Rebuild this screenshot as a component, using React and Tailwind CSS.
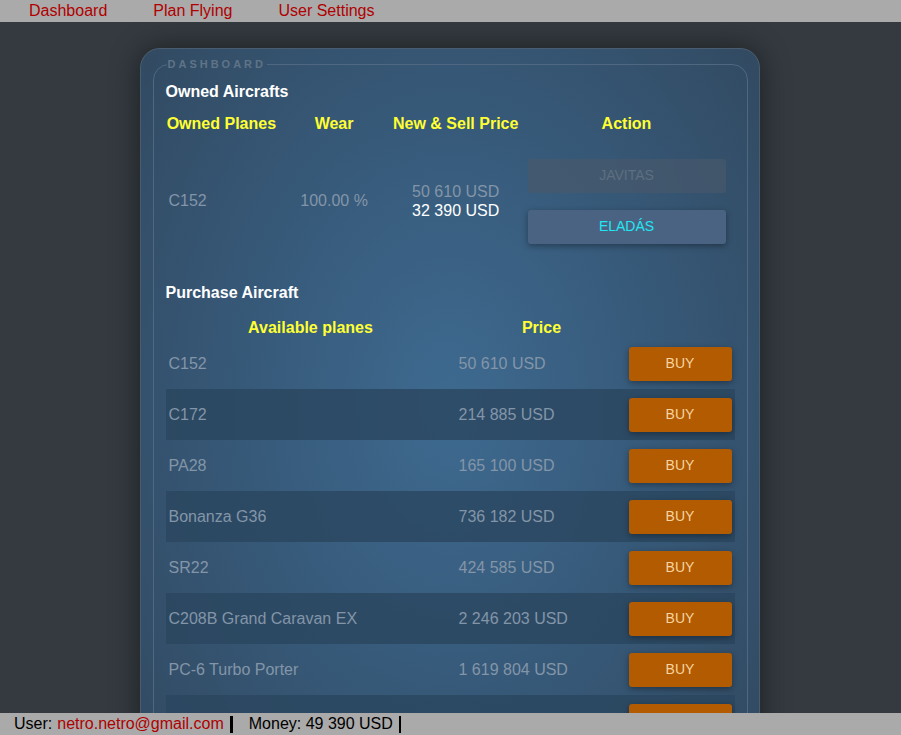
import React from "react";

const planes = [
  ["C152", "50 610 USD"],
  ["C172", "214 885 USD"],
  ["PA28", "165 100 USD"],
  ["Bonanza G36", "736 182 USD"],
  ["SR22", "424 585 USD"],
  ["C208B Grand Caravan EX", "2 246 203 USD"],
  ["PC-6 Turbo Porter", "1 619 804 USD"],
  ["King Air 350", "7 950 000 USD"],
  ["TBM 930", "4 250 000 USD"],
];

function App() {
  return (
    <div
      className="h-[735px] w-full overflow-hidden flex flex-col bg-[#343a40]"
      style={{ fontFamily: '"Liberation Sans", Arial, sans-serif' }}
    >
      <nav className="h-[22px] shrink-0 bg-[#aaaaaa] flex items-center pl-[29px] gap-[46px] text-[16px] leading-[22px] text-[#b00000]">
        <a href="#">Dashboard</a>
        <a href="#">Plan Flying</a>
        <a href="#">User Settings</a>
      </nav>

      <main className="flex-1 overflow-hidden flex items-start justify-center pt-[26px] pr-[2px]">
        <div className="w-[620px] shrink-0 rounded-[20px] border border-[#4a5d70] shadow-[0_0_30px_rgba(0,0,0,0.45)] bg-[radial-gradient(ellipse_at_50%_45%,#3e6a90_0%,#375a7a_45%,#31475d_100%)] px-[12px] pt-[10px] pb-6">
          <fieldset className="border border-[#4f6780] rounded-[16px] px-[12px] pb-4">
            <legend className="ml-[1px] px-[1px] text-[11px] font-bold tracking-[3px] text-[#5f7487] leading-none">
              DASHBOARD
            </legend>

            <h2 className="mt-[14px] text-[16px] font-bold text-white leading-none">Owned Aircrafts</h2>

            <table className="mt-[12px] w-[567px] border-separate border-spacing-0 text-[16px]">
              <thead>
                <tr className="text-[#ffff33] font-bold h-[20px]">
                  <th className="w-[112px] font-bold">Owned Planes</th>
                  <th className="w-[114px] font-bold">Wear</th>
                  <th className="w-[130px] font-bold">New &amp; Sell Price</th>
                  <th className="font-bold">Action</th>
                </tr>
              </thead>
              <tbody>
                <tr className="h-[130px] align-middle">
                  <td className="text-left pl-[3px] text-[#8395a8]">C152</td>
                  <td className="text-center text-[#8395a8]">100.00 %</td>
                  <td className="text-center leading-[19px]">
                    <div className="text-[#8395a8]">50 610 USD</div>
                    <div className="text-white">32 390 USD</div>
                  </td>
                  <td className="px-[7px]">
                    <div className="flex flex-col gap-[17px]">
                      <button className="h-[34px] w-[198px] rounded-[3px] bg-[#47596b]/70 text-[14px] text-[#5d6f80] uppercase">
                        JAVITAS
                      </button>
                      <button className="h-[34px] w-[198px] rounded-[3px] bg-[#4b6383] text-[14px] text-[#22e6f2] shadow-[0_2px_6px_rgba(0,0,0,0.35)]">
                        ELADÁS
                      </button>
                    </div>
                  </td>
                </tr>
              </tbody>
            </table>

            <h2 className="mt-[19px] text-[16px] font-bold text-white leading-none">Purchase Aircraft</h2>

            <table className="mt-[17px] w-[569px] border-separate border-spacing-0 text-[16px]">
              <thead>
                <tr className="text-[#ffff33] font-bold leading-[20px]">
                  <th className="w-[290px] font-bold">Available planes</th>
                  <th className="w-[172px] font-bold">Price</th>
                  <th></th>
                </tr>
              </thead>
              <tbody>
                {planes.map(([name, price], i) => (
                  <tr key={name} className={"h-[51px] " + (i % 2 === 1 ? "bg-[#2b465f]/80" : "")}>
                    <td className="pl-[3px] text-[#8395a8]">{name}</td>
                    <td className="pl-[3px] text-[#8395a8]">{price}</td>
                    <td className="pr-[2px]">
                      <button className="ml-[1px] h-[34px] w-[103px] rounded-[3px] bg-[#b25b00] text-[14px] text-[#f6d4a0] shadow-[0_2px_6px_rgba(0,0,0,0.35)]">
                        BUY
                      </button>
                    </td>
                  </tr>
                ))}
              </tbody>
            </table>
          </fieldset>
        </div>
      </main>

      <footer className="h-[22px] shrink-0 bg-[#aaaaaa] flex items-center pl-[14px] text-[16px] leading-[22px] text-black">
        <span>User:</span>
        <span className="ml-[5px] text-[#b00000]">netro.netro@gmail.com</span>
        <span className="ml-[6px] w-[3px] h-[17px] bg-black"></span>
        <span className="ml-[16px]">Money: 49 390 USD</span>
        <span className="ml-[6px] w-[2px] h-[17px] bg-black"></span>
      </footer>
    </div>
  );
}

export default App;
